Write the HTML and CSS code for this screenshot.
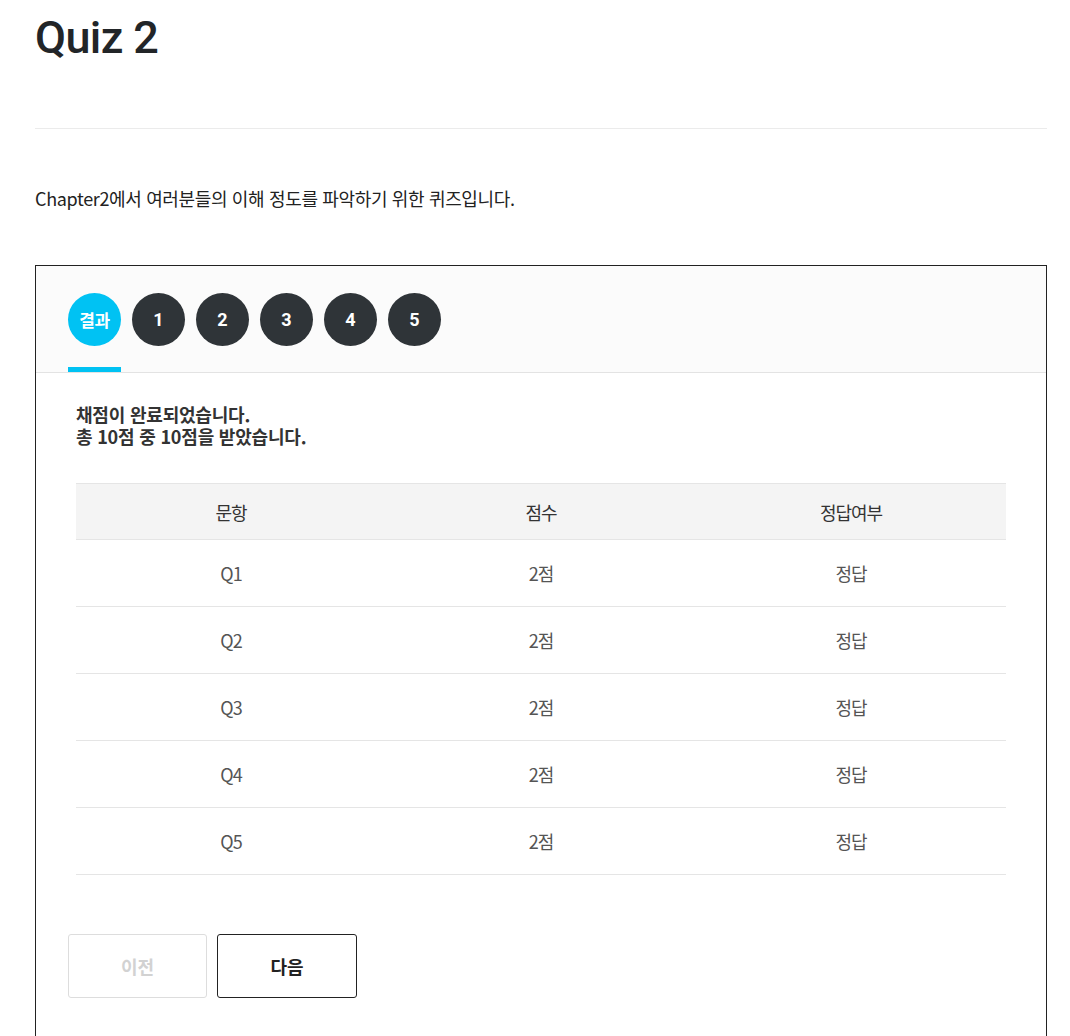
FILE: index.html
```html
<!DOCTYPE html>
<html lang="ko">
<head>
<meta charset="utf-8">
<title>Quiz 2</title>
<link rel="stylesheet" href="styles.css">
</head>
<body>
<div class="page">
  <h1 class="title">Quiz 2</h1>
  <hr class="divider">
  <p class="desc">Chapter2에서 여러분들의 이해 정도를 파악하기 위한 퀴즈입니다.</p>
  <div class="quiz">
    <div class="tabs">
      <div class="tab active"><span class="dot">결과</span></div>
      <div class="tab"><span class="dot">1</span></div>
      <div class="tab"><span class="dot">2</span></div>
      <div class="tab"><span class="dot">3</span></div>
      <div class="tab"><span class="dot">4</span></div>
      <div class="tab"><span class="dot">5</span></div>
    </div>
    <div class="body">
      <div class="summary">
        <p class="line">채점이 완료되었습니다.</p>
        <p class="line">총 10점 중 10점을 받았습니다.</p>
      </div>
      <table class="result">
        <thead>
          <tr><th>문항</th><th>점수</th><th>정답여부</th></tr>
        </thead>
        <tbody>
          <tr><td>Q1</td><td>2점</td><td>정답</td></tr>
          <tr><td>Q2</td><td>2점</td><td>정답</td></tr>
          <tr><td>Q3</td><td>2점</td><td>정답</td></tr>
          <tr><td>Q4</td><td>2점</td><td>정답</td></tr>
          <tr><td>Q5</td><td>2점</td><td>정답</td></tr>
        </tbody>
      </table>
      <div class="buttons">
        <button class="btn disabled">이전</button>
        <button class="btn">다음</button>
      </div>
    </div>
  </div>
</div>
</body>
</html>
```
FILE: styles.css
```css
* { box-sizing: border-box; }
html, body { margin: 0; padding: 0; background: #fff; }
body {
  font-family: "Noto Sans CJK KR", "Noto Sans", sans-serif;
  color: #222;
}
.page { padding: 0 23px 0 35px; }
.title {
  margin: 0;
  padding-top: 10px;
  font-family: Roboto, "Noto Sans CJK KR", sans-serif;
  font-size: 45px;
  font-weight: 500;
  line-height: 56px;
  color: #222528;
  letter-spacing: -0.6px;
}
.divider {
  margin: 62px 0 0;
  border: 0;
  border-top: 1px solid #ebebeb;
  height: 0;
}
.desc {
  margin: 56px 0 0;
  font-size: 18px;
  line-height: 26px;
  color: #222;
  letter-spacing: -0.35px;
}
.quiz {
  margin-top: 54px;
  border: 1px solid #222;
  border-bottom: 0;
  height: 800px;
}
.tabs {
  display: flex;
  gap: 11px;
  padding: 27px 32px 0;
  background: #fbfbfb;
  border-bottom: 1px solid #e3e3e3;
  height: 107px;
}
.tab {
  width: 53px;
  height: 79px;
  position: relative;
}
.dot {
  display: flex;
  align-items: center;
  justify-content: center;
  width: 53px;
  height: 53px;
  border-radius: 50%;
  background: #2f3438;
  color: #fff;
  font-family: Roboto, "Noto Sans CJK KR", sans-serif;
  font-size: 18px;
  font-weight: 700;
}
.tab.active .dot {
  background: #00c2f3;
  font-size: 17px;
  letter-spacing: -0.5px;
}
.tab.active::after {
  content: "";
  position: absolute;
  left: 0;
  right: 0;
  bottom: 0;
  height: 5px;
  background: #00c2f3;
}
.body { padding: 30px 40px 0; }
.summary {
  display: flex;
  flex-direction: column;
}
.line {
  margin: 0;
  font-size: 18px;
  font-weight: 700;
  line-height: 22px;
  color: #333;
  letter-spacing: -0.2px;
  white-space: nowrap;
}
.result {
  margin-top: 36px;
  width: 100%;
  border-collapse: collapse;
  table-layout: fixed;
}
.result th, .result td {
  text-align: center;
  font-size: 18px;
  font-weight: 400;
  color: #555;
  letter-spacing: -1px;
}
.result th {
  height: 56px;
  background: #f4f4f4;
  border-top: 1px solid #e5e5e5;
  border-bottom: 1px solid #e5e5e5;
  color: #333;
}
.result td {
  height: 67px;
  border-bottom: 1px solid #e5e5e5;
}
.buttons {
  display: flex;
  gap: 10px;
  margin: 59px 0 0 -8px;
}
.btn {
  width: 139px;
  height: 64px;
  background: #fff;
  border: 1px solid #222;
  border-radius: 3px;
  font-family: inherit;
  font-size: 18px;
  font-weight: 700;
  color: #222;
  padding: 0;
}
.btn + .btn { width: 140px; }
.btn.disabled {
  border-color: #ddd;
  color: #d2d2d2;
}
```
